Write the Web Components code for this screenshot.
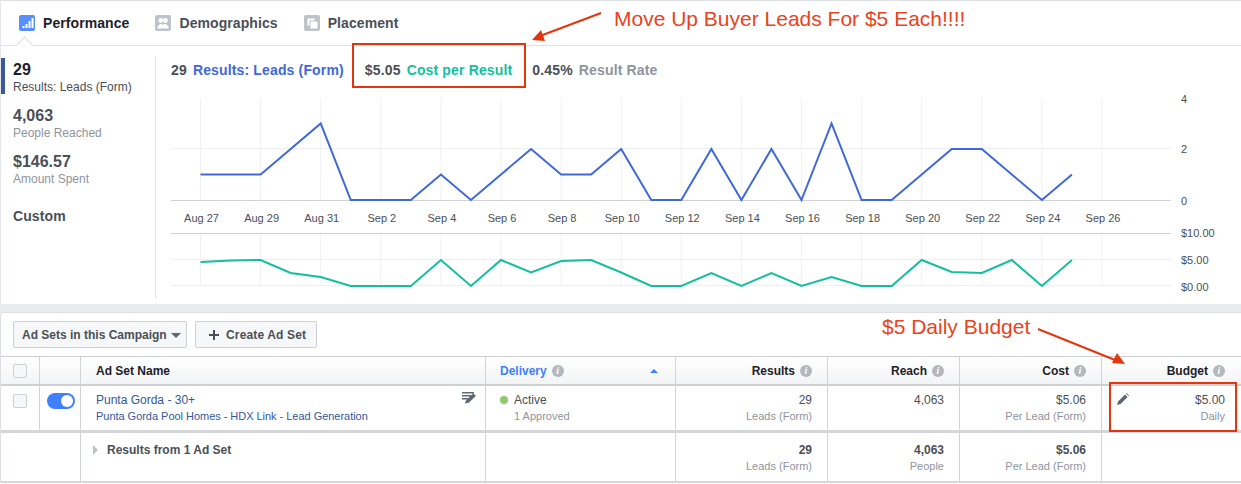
<!DOCTYPE html>
<html>
<head>
<title>Campaign insights</title>
<meta name="viewport" content="width=device-width">
<style type="text/css">
	html, body {
		margin:0;
		background:#fff;
		font-family:'Liberation Sans', Arial, sans-serif;
		font-size:12px;
		color:#4b4f56;
	}
	body {
		width:1241px;
		height:484px;
		overflow:hidden;
		position:relative;
	}
</style>
</head>
<body>

<insights-panel>
	<tab-bar>
		<tab-item active icon="bars">Performance</tab-item>
		<tab-item icon="people">Demographics</tab-item>
		<tab-item icon="stack">Placement</tab-item>
	</tab-bar>
	<div slot="body" style="display:contents">
		<metric-list>
			<metric-item active value="29" label="Results: Leads (Form)"></metric-item>
			<metric-item value="4,063" label="People Reached"></metric-item>
			<metric-item value="$146.57" label="Amount Spent"></metric-item>
			<range-label>Custom</range-label>
		</metric-list>
		<chart-area></chart-area>
	</div>
</insights-panel>

<adset-card>
	<adset-toolbar></adset-toolbar>
	<adset-row kind="head">
		<adset-cell><check-box></check-box></adset-cell>
		<adset-cell></adset-cell>
		<adset-cell pad="15"><b class="h" style="color:#1d2129;font-weight:bold">Ad Set Name</b></adset-cell>
		<adset-cell pad="14"><head-label blue sort>Delivery</head-label></adset-cell>
		<adset-cell align="right"><head-label>Results</head-label></adset-cell>
		<adset-cell align="right"><head-label>Reach</head-label></adset-cell>
		<adset-cell align="right"><head-label>Cost</head-label></adset-cell>
		<adset-cell align="right"><head-label>Budget</head-label></adset-cell>
	</adset-row>
	<adset-row kind="body">
		<adset-cell top="8"><check-box></check-box></adset-cell>
		<adset-cell top="7"><on-switch></on-switch></adset-cell>
		<adset-cell pad="15"><name-cell title-text="Punta Gorda - 30+" sub="Punta Gorda Pool Homes - HDX Link - Lead Generation"></name-cell></adset-cell>
		<adset-cell pad="14"><status-cell></status-cell></adset-cell>
		<adset-cell align="right"><num-cell value="29" sub="Leads (Form)"></num-cell></adset-cell>
		<adset-cell align="right"><num-cell value="4,063"></num-cell></adset-cell>
		<adset-cell align="right"><num-cell value="$5.06" sub="Per Lead (Form)"></num-cell></adset-cell>
		<adset-cell align="right"><num-cell value="$5.00" sub="Daily" pencil></num-cell></adset-cell>
	</adset-row>
	<adset-row kind="total">
		<adset-cell span="2"></adset-cell>
		<adset-cell pad="12"><total-name>Results from 1 Ad Set</total-name></adset-cell>
		<adset-cell></adset-cell>
		<adset-cell align="right"><num-cell strong value="29" sub="Leads (Form)"></num-cell></adset-cell>
		<adset-cell align="right"><num-cell strong value="4,063" sub="People"></num-cell></adset-cell>
		<adset-cell align="right"><num-cell strong value="$5.06" sub="Per Lead (Form)"></num-cell></adset-cell>
		<adset-cell></adset-cell>
	</adset-row>
</adset-card>

<!-- red notes drawn over the screenshot -->
<note-box style="left:352px;top:43px;width:170px;height:41px"></note-box>
<note-box style="left:1109px;top:382px;width:124px;height:46px"></note-box>
<note-text style="left:614px;top:7px">Move Up Buyer Leads For $5 Each!!!!</note-text>
<note-text style="left:882px;top:315px">$5 Daily Budget</note-text>
<note-arrows></note-arrows>

<script type="text/javascript">

// small helper, every element is just a shadow root with some css + html
function el(name, css, html, setup) {
	customElements.define(name, class extends HTMLElement {
		constructor() {
			super()
			this.attachShadow({mode:'open'})
		}
		connectedCallback() {
			const a = n => this.getAttribute(n)
			const h = typeof html == 'function' ? html(a, this) : html
			this.shadowRoot.innerHTML = '<style>' + css + '</style>' + h
			if (setup) setup(this)
		}
	})
}

const ICONS = {
	bars: '<rect x="3.5" y="11" width="2" height="2" fill="#fff"/><rect x="6.5" y="9" width="2" height="4" fill="#fff"/><rect x="9.5" y="6" width="2" height="7" fill="#fff"/><rect x="12.5" y="3" width="2" height="10" fill="#fff"/>',
	people: '<circle cx="5.800" cy="5.500" r="2.400" fill="#fff"/><circle cx="10.400" cy="5.500" r="2.400" fill="#fff"/><path d="M2.500 13.500v-2l2.500-2.500h1.800l1.200 1 1.200-1h1.800l2.500 2.500v2z" fill="#fff"/>',
	stack: '<path d="M3.500 3.500h7v2h-5v5h-2z" fill="#fff"/><rect x="6.500" y="6.500" width="7" height="7" fill="#fff"/>'
}

el('insights-panel', `
	:host { display:block; height:304px; box-sizing:border-box; border-top:1px solid #dddfe2; border-left:1px solid #e5e6e9; }
	.body { display:flex; height:258px; }
`, `<slot></slot><div class="body"><slot name="body"></slot></div>`)

el('tab-bar', `
	:host { display:flex; height:44px; padding-left:18px; gap:26px; border-bottom:1px solid #e1e2e5; }
`, `<slot></slot>`)

el('tab-item', `
	:host { display:flex; align-items:center; gap:8px; position:relative; font-size:14px; font-weight:bold; color:#4b4f56; padding-bottom:1px; letter-spacing:.08px; }
	:host([active]) { color:#1d2129; }
	svg { display:block; width:16px; height:16px; }
	.tip { position:absolute; left:0; bottom:-6px; width:11px; height:11px; margin-left:1px; transform:rotate(45deg) translate(-1px,1px); background:#fff; border-left:1px solid #dddfe2; border-top:1px solid #dddfe2; }
`, (a, t) => `<svg viewBox="0 0 16 16"><rect width="16" height="16" rx="2" fill="${t.hasAttribute('active') ? '#5890ff' : '#bec2c9'}"/>${ICONS[a('icon')]}</svg><span><slot></slot></span>` + (t.hasAttribute('active') ? '<i class="tip"></i>' : ''))

el('metric-list', `
	:host { display:block; width:154px; box-sizing:border-box; padding-top:12px; flex:none; }
`, `<slot></slot>`)

el('metric-item', `
	:host { display:block; height:46px; box-sizing:border-box; padding:3px 0 0 12px; position:relative; color:#4b4f56; }
	:host([active]) { box-shadow:inset 4px 0 0 #3b5998; color:#1d2129; height:36px; margin-bottom:10px; padding-top:3px }
	.v { font-size:16px; font-weight:bold; line-height:18px; }
	.l { font-size:12px; line-height:15px; color:#90949c; margin-top:1px; }
	:host([active]) .l { color:#4b4f56; }
`, a => `<div class="v">${a('value')}</div><div class="l">${a('label')}</div>`)

el('range-label', `
	:host { display:block; padding:12px 0 0 12px; font-size:14px; font-weight:bold; color:#4b4f56; letter-spacing:.1px; }
`, `<slot></slot>`)

el('chart-area', `
	:host { display:block; flex:1; position:relative; }
	.legend { position:absolute; left:16px; top:16px; font-size:14px; letter-spacing:.15px; font-weight:bold; color:#4b4f56; white-space:nowrap; display:flex; }
	.legend b { margin-right:6px; } .legend span { margin-right:20px; }
	.legend span.first { margin-right:21px; }
	svg { position:absolute; left:-155px; top:-46px; width:1241px; height:304px; display:block; }
	text { font-family:'Liberation Sans', Arial, sans-serif; font-size:11px; fill:#4b4f56; }
	.rule { position:absolute; left:0; top:10px; bottom:6px; width:1px; background:#e5e6e9; }
`, () => {
	const x = i => 200.5 + 30.05 * i
	const blue = [1,1,1,2,3,0,0,0,1,0,1,2,1,1,2,0,0,2,0,2,0,3,0,0,1,2,2,1,0,1]
	const green = [262,260.5,260,273,277,286,286,286,260,286,260,272.5,261,260,272.5,286,286,273,286,273,286,277,286,286,260,272,273,260,286,260]
	const names = ['Aug 27','Aug 29','Aug 31','Sep 2','Sep 4','Sep 6','Sep 8','Sep 10','Sep 12','Sep 14','Sep 16','Sep 18','Sep 20','Sep 22','Sep 24','Sep 26']
	let s = ''
	names.forEach((n, i) => {
		const X = x(i * 2)
		s += `<path d="M${X} 98V200M${X} 234V286" stroke="#f1f1f2" fill="none"/>`
		s += `<text x="${X + 1}" y="222" text-anchor="middle">${n}</text>`
	})
	s += `<path d="M171 148.5H1171M171 259.5H1171M171 285.5H1171" stroke="#eeeff1" fill="none"/>`
	s += `<path d="M171 200.5H1171M171 233.5H1171" stroke="#cfd1d5" fill="none"/>`
	s += `<polyline points="${blue.map((v, i) => x(i) + ',' + (200 - v * 25.5)).join(' ')}" fill="none" stroke="#3f68d9" stroke-width="2"/>`
	s += `<polyline points="${green.map((v, i) => x(i) + ',' + v).join(' ')}" fill="none" stroke="#13bf9f" stroke-width="2"/>`
	;[['4',103],['2',153],['0',205],['$10.00',237],['$5.00',264],['$0.00',291]].forEach(t => {
		s += `<text x="1181" y="${t[1]}">${t[0]}</text>`
	})
	return `<svg viewBox="0 0 1241 304">${s}</svg><div class="rule"></div>
	<div class="legend"><b>29</b><span class="first" style="color:#3f68d9">Results: Leads (Form)</span><b>$5.05</b><span style="color:#13bf9f">Cost per Result</span><b>0.45%</b><span style="color:#90949c;margin:0">Result Rate</span></div>`
})

el('adset-card', `
	:host { display:block; position:absolute; left:0; top:304px; width:1241px; height:180px; box-sizing:border-box; background:#fff; border-top:9px solid #e9ebee; }
	.wrap { border-left:1px solid #dddfe2; border-top:1px solid #dddfe2; border-radius:3px 0 0 0; margin-top:-1px; }
`, `<div class="wrap"><slot></slot></div>`)

el('adset-toolbar', `
	:host { display:flex; gap:8px; height:43px; box-sizing:border-box; padding:8px 0 0 12px; }
	.b { height:27px; box-sizing:border-box; border:1px solid #ced0d4; border-radius:2px; background:#f6f7f9; color:#4b4f56; font-weight:bold; font-size:12px; display:flex; align-items:center; }
	.a { width:174px; padding-left:8px; gap:4px; }
	.a i { width:0; height:0; border:5px solid transparent; border-top:5px solid #606770; border-bottom:0; margin-top:1px; }
	.c { width:122px; padding-left:12px; gap:6px; letter-spacing:.15px; }
	svg { width:12px; height:12px; display:block; }
`, `<div class="b a">Ad Sets in this Campaign<i></i></div>
	<div class="b c"><svg viewBox="0 0 12 12"><path d="M5 1h2v4h4v2H7v4H5V7H1V5h4z" fill="#4b4f56"/></svg>Create Ad Set</div>`)

el('adset-row', `
	:host { display:grid; grid-template-columns:39px 41px 405px 190px 152px 132px 142px 139px; }
	:host([kind=head]) { height:30px; box-sizing:border-box; border-top:1px solid #ced0d4; border-bottom:2px solid #ced0d4; background:linear-gradient(#fff,#f3f4f5); font-weight:bold; }
	:host([kind=body]) { height:47px; box-sizing:border-box; border-bottom:3px solid #d5d6d9; }
	:host([kind=total]) { height:50px; box-sizing:border-box; border-bottom:2px solid #d5d6d9; }
`, `<slot></slot>`)

el('adset-cell', `
	:host { display:block; box-sizing:border-box; border-right:1px solid #d3d4d7; min-width:0; }
	:host(:last-child) { border-right:0; }
	:host([align=right]) { text-align:right; padding-right:15px; }
	:host([align=right]:last-child) { padding-right:16px; }
`, `<slot></slot>`, t => {
	const p = t.getAttribute('pad')
	if (p) t.style.paddingLeft = p + 'px'
	const s = t.getAttribute('span')
	if (s) t.style.gridColumn = 'span ' + s
	const top = t.getAttribute('top')
	if (top) t.style.paddingTop = top + 'px'
	// header cells centre their label on one line
	if (t.parentElement.getAttribute('kind') == 'head') {
		t.style.display = 'flex'
		t.style.alignItems = 'center'
		if (t.getAttribute('align') == 'right') t.style.justifyContent = 'flex-end'
	}
})

el('check-box', `
	:host { display:block; width:14px; height:14px; margin-left:12px; box-sizing:border-box; border:1px solid #ced0d4; border-radius:2px; background:#f6f7f9; }
`, ``)

el('on-switch', `
	:host { display:block; width:28px; height:16px; margin-left:7px; border-radius:8px; background:#4080ff; position:relative; }
	i { position:absolute; right:2px; top:2px; width:12px; height:12px; border-radius:50%; background:#fff; }
`, `<i></i>`)

el('info-dot', `
	:host { display:inline-block; width:12px; height:12px; border-radius:50%; background:#b4b7bd; color:#fff; font:italic bold 10px/12px 'Liberation Serif', serif; text-align:center; }
`, `i`)

el('head-label', `
	:host { display:flex; align-items:center; gap:5px; flex:1; justify-content:flex-end; color:#1d2129; }
	:host([blue]) { color:#4080ff; justify-content:flex-start; }
	.s { margin-left:auto; margin-right:17px; width:0; height:0; border:4px solid transparent; border-bottom:4px solid #4080ff; border-top:0; }
`, (a, t) => `<span><slot></slot></span><info-dot></info-dot>` + (t.hasAttribute('sort') ? '<i class="s"></i>' : ''))

el('name-cell', `
	:host { display:block; position:relative; padding-top:6px; color:#365899; }
	.t { line-height:16px; } .s { font-size:11px; line-height:16px; white-space:nowrap; letter-spacing:-.03px; }
	svg { position:absolute; right:8px; top:6px; width:15px; height:13px; }
`, a => `<div class="t">${a('title-text')}</div><div class="s">${a('sub')}</div>
	<svg viewBox="0 0 15 13"><path d="M0 0h12v1.600H0zM0 3h9v1.600H0zM0 6h6v1.600H0zM3 11.500l1-3 7-7 3 2.200-7.200 7z" fill="#616770"/></svg>`)

el('status-cell', `
	:host { display:block; padding-top:6px; color:#4b4f56; }
	.t { line-height:16px; display:flex; align-items:center; gap:6px; } i { width:8px; height:8px; border-radius:50%; background:#90c76f; }
	.s { font-size:11px; line-height:16px; color:#90949c; margin-left:14px; }
`, `<div class="t"><i></i>Active</div><div class="s">1 Approved</div>`)

el('num-cell', `
	:host { display:block; position:relative; padding-top:6px; color:#4b4f56; }
	:host([strong]) { padding-top:9px; }
	:host([strong]) .v { font-weight:bold; }
	.v { line-height:16px; } .s { font-size:11px; line-height:16px; color:#90949c; }
	svg { position:absolute; left:15px; top:7px; width:12px; height:12px; }
`, (a, t) => `<div class="v">${a('value')}</div>` + (a('sub') ? `<div class="s">${a('sub')}</div>` : '') +
	(t.hasAttribute('pencil') ? '<svg viewBox="0 0 12 12"><path d="M0 12l1-3.600 7-7L10.600 4l-7 7zM9 .6l.6-.6L12 2.400l-.6.6z" fill="#616770"/></svg>' : ''))

el('total-name', `
	:host { display:block; padding-top:10px; font-weight:bold; color:#4b4f56; }
	i { display:inline-block; width:0; height:0; border:5px solid transparent; border-left:5px solid #bec2c9; border-right:0; margin-right:9px; vertical-align:-1px; }
`, `<i></i><slot></slot>`)

el('note-box', `:host { display:block; position:absolute; border:2px solid #e5350d; }`, ``)
el('note-text', `:host { display:block; position:absolute; font-size:21px; line-height:24px; color:#ea4320; white-space:nowrap; }`, `<slot></slot>`)
el('note-arrows', `
	:host { display:block; position:absolute; left:0; top:0; width:1241px; height:484px; pointer-events:none; }
	svg { display:block; }
`, `<svg width="1241" height="484" viewBox="0 0 1241 484">
	<path d="M601 13L540 36" stroke="#e5350d" stroke-width="2" fill="none"/>
	<path d="M532 40L541 30L545 41z" fill="#e5350d"/>
	<path d="M1038 329L1115 360" stroke="#e5350d" stroke-width="2" fill="none"/>
	<path d="M1125 364L1112 363L1117 353z" fill="#e5350d"/>
</svg>`)

</script>
</body>
</html>
